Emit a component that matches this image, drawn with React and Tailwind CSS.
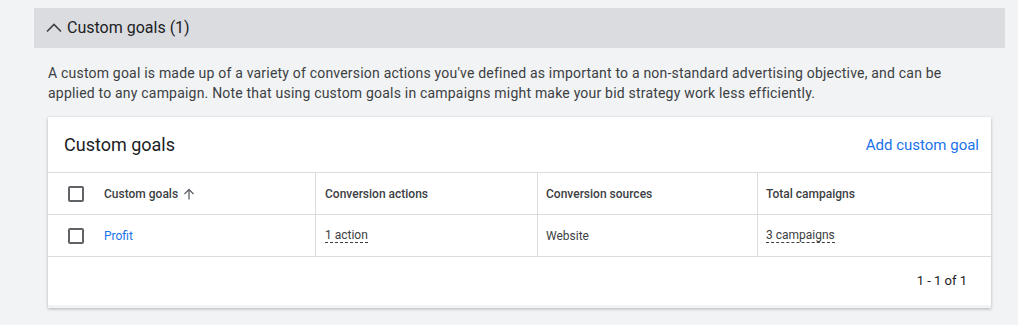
export default function App() {
  const cols = "grid grid-cols-[268px_222px_220px_1fr]";
  return (
    <div className="h-[325px] w-[1018px] bg-[#f1f3f4] pt-2 pl-[34px] pr-[13px] font-['Roboto',sans-serif] text-[#3c4043]">
      <div className="flex h-10 items-center gap-[5px] bg-[#dadce0] pl-3 text-[#202124]">
        <svg width="16" height="10" viewBox="0 0 16 10" fill="none" stroke="#3c4043" strokeWidth="1.6">
          <path d="M1 8.5l7-7 7 7" />
        </svg>
        <span className="text-[16px]">Custom goals (1)</span>
      </div>
      <div className="px-[14px]">
        <p className="pt-[15px] pb-[14px] text-[14px] leading-[20px] tracking-[0.2px] text-[#3c4043]">
          A custom goal is made up of a variety of conversion actions you've defined as important to a non-standard advertising objective, and can be
          <br />
          applied to any campaign. Note that using custom goals in campaigns might make your bid strategy work less efficiently.
        </p>
        <div className="border-b-[3px] border-[#f1f3f4] bg-white shadow-[0_1px_3px_rgba(60,64,67,0.35)]">
          <div className="flex h-14 items-center justify-between pl-4 pr-3 border-b border-[#dadce0]">
            <span className="text-[18px] text-[#202124]">Custom goals</span>
            <span className="mt-[2px] text-[15px] text-[#1a73e8]">Add custom goal</span>
          </div>
          <div className={`${cols} h-[42px] items-stretch border-b border-[#dadce0] text-[12px] font-medium text-[#3c4043]`}>
            <div className="flex items-center border-r border-[#dadce0] pl-5">
              <span className="h-4 w-4 rounded-[2px] border-2 border-[#5f6368]" />
              <span className="ml-5">Custom goals</span>
              <svg className="ml-[5px]" width="12" height="12" viewBox="0 0 12 12" fill="none" stroke="#5f6368" strokeWidth="1.3">
                <path d="M6 11.5V1.5M1.5 6L6 1.5 10.5 6" />
              </svg>
            </div>
            <div className="flex items-center border-r border-[#dadce0] pl-[9px]">Conversion actions</div>
            <div className="flex items-center border-r border-[#dadce0] pl-2">Conversion sources</div>
            <div className="flex items-center pl-2">Total campaigns</div>
          </div>
          <div className={`${cols} h-[42px] items-stretch border-b border-[#dadce0] text-[12px] text-[#3c4043]`}>
            <div className="flex items-center border-r border-[#dadce0] pl-5">
              <span className="h-4 w-4 rounded-[2px] border-2 border-[#5f6368]" />
              <span className="ml-5 text-[#1a73e8]">Profit</span>
            </div>
            <div className="flex items-center border-r border-[#dadce0] pl-[9px]">
              <span className="border-b border-dashed border-[#3c4043] leading-[14px]">1 action</span>
            </div>
            <div className="flex items-center border-r border-[#dadce0] pl-2">Website</div>
            <div className="flex items-center pl-2">
              <span className="border-b border-dashed border-[#3c4043] leading-[14px]">3 campaigns</span>
            </div>
          </div>
          <div className="flex h-12 items-center justify-end pr-6 text-[13px] text-[#202124]">1 - 1 of 1</div>
        </div>
      </div>
    </div>
  );
}
